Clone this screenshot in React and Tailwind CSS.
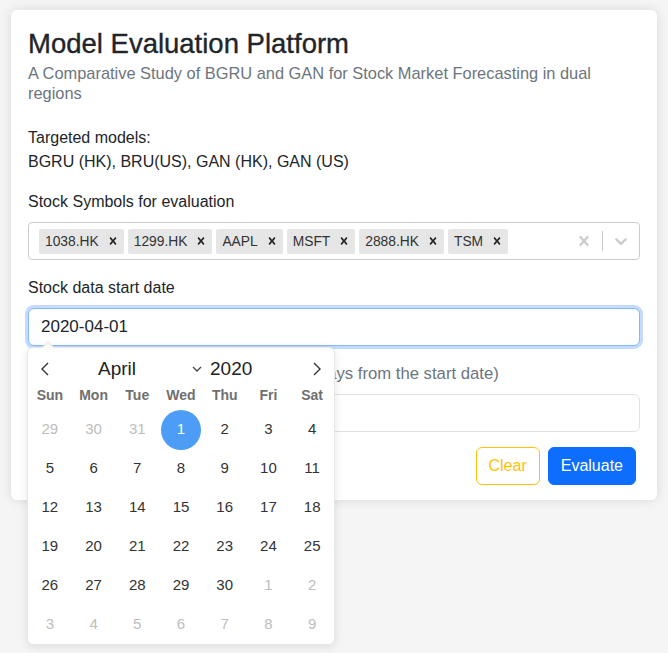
import React from "react";

const tags = ["1038.HK", "1299.HK", "AAPL", "MSFT", "2888.HK", "TSM"];
const weekDays = ["Sun", "Mon", "Tue", "Wed", "Thu", "Fri", "Sat"];

// 6 weeks starting Sun 29 March 2020
const cells = Array.from({ length: 42 }, (_, i) => {
  if (i < 3) return { label: 29 + i, outside: true };
  const n = i - 2;
  if (n > 30) return { label: n - 30, outside: true };
  return { label: n, outside: false, selected: n === 1 };
});

const CrossIcon = ({ size = 20, className = "" }) => (
  <svg width={size} height={size} viewBox="0 0 20 20" className={className} fill="currentColor">
    <path d="M14.348 14.849c-0.469 0.469-1.229 0.469-1.697 0l-2.651-3.030-2.651 3.029c-0.469 0.469-1.229 0.469-1.697 0-0.469-0.469-0.469-1.229 0-1.697l2.758-3.15-2.759-3.152c-0.469-0.469-0.469-1.228 0-1.697s1.228-0.469 1.697 0l2.652 3.031 2.651-3.031c0.469-0.469 1.228-0.469 1.697 0s0.469 1.229 0 1.697l-2.758 3.152 2.758 3.15c0.469 0.469 0.469 1.229 0 1.698z" />
  </svg>
);

const ChevronIcon = ({ size = 20, className = "" }) => (
  <svg width={size} height={size} viewBox="0 0 20 20" className={className} fill="currentColor">
    <path d="M4.516 7.548c0.436-0.446 1.043-0.481 1.576 0l3.908 3.747 3.908-3.747c0.533-0.481 1.141-0.446 1.574 0 0.436 0.445 0.408 1.197 0 1.615-0.406 0.418-4.695 4.502-4.695 4.502-0.217 0.223-0.502 0.335-0.787 0.335s-0.57-0.112-0.789-0.335c0 0-4.287-4.084-4.695-4.502s-0.436-1.17 0-1.615z" />
  </svg>
);

const Calendar = () => (
  <div className="absolute left-[-1px] top-[39px] z-10 w-[308px] rounded-[6px] border border-[#e6e6e6] bg-white pt-[8px] shadow-[0_2px_10px_rgba(0,0,0,0.1)]">
    <div className="absolute left-[16px] top-[-5px] h-[8px] w-[8px] rotate-45 border-l border-t border-[#e6e6e6] bg-white" />
    <div className="flex h-[26px] items-center text-[#222]">
      <div className="flex w-[34px] justify-center">
        <svg width="8" height="14" viewBox="0 0 8 14" fill="none" stroke="#333" strokeWidth="1.4">
          <path d="M7 1 1 7l6 6" />
        </svg>
      </div>
      <span className="ml-[36px] text-[19px]">April</span>
      <svg className="ml-[56px]" width="10" height="6" viewBox="0 0 10 6" fill="none" stroke="#444" strokeWidth="1.3">
        <path d="m1 1 4 4 4-4" />
      </svg>
      <span className="ml-[8px] text-[19px]">2020</span>
      <div className="ml-auto flex w-[34px] justify-center">
        <svg width="8" height="14" viewBox="0 0 8 14" fill="none" stroke="#333" strokeWidth="1.4">
          <path d="m1 1 6 6-6 6" />
        </svg>
      </div>
    </div>
    <div className="mt-[3px] grid h-[20px] grid-cols-7 items-center text-center text-[14px] font-bold text-[#6f6f6f]">
      {weekDays.map((d) => (
        <div key={d}>{d}</div>
      ))}
    </div>
    <div className="mt-[5px] grid grid-cols-7">
      {cells.map((c, i) => (
        <div key={i} className="flex h-[39px] items-center justify-center text-[15px]">
          {c.selected ? (
            <div className="flex h-[40px] w-[40px] items-center justify-center rounded-full bg-[#4d9cf5] text-white">
              {c.label}
            </div>
          ) : (
            <span className={c.outside ? "text-[#bdbdbd]" : "text-[#333]"}>{c.label}</span>
          )}
        </div>
      ))}
    </div>
  </div>
);

export default function App() {
  return (
    <div className="min-h-screen bg-[#f5f5f5] px-[11px] pt-[10px] font-['Liberation_Sans',Arial,sans-serif] text-[16px] text-[#212529]">
      <div className="rounded-[6px] bg-white px-[17px] pb-[15px] pt-[17px] shadow-[0_0_12px_rgba(0,0,0,0.12)]">
        <h1 className="text-[27.5px] font-medium leading-[1.2] [-webkit-text-stroke:0.35px_#212529]">
          Model Evaluation Platform
        </h1>
        <p className="mt-[3px] text-[16.4px] leading-[20px] text-[#6c757d]">
          A Comparative Study of BGRU and GAN for Stock Market Forecasting in dual regions
        </p>

        <div className="mt-[23px] leading-[24px]">
          <div>Targeted models:</div>
          <div>BGRU (HK), BRU(US), GAN (HK), GAN (US)</div>
        </div>

        <div className="mt-[16px]">
          <label className="mb-[8px] block leading-[24px]">Stock Symbols for evaluation</label>
          <div className="flex min-h-[38px] items-center rounded-[4px] border border-[#cccccc] bg-white">
            <div className="flex flex-1 flex-wrap items-center px-[8px] py-[2px]">
              {tags.map((t) => (
                <div key={t} className="m-[2px] flex items-center rounded-[2px] bg-[#e6e6e6]">
                  <span className="py-[3px] pl-[6px] pr-[3px] text-[13.8px] leading-[19px] text-[#333]">{t}</span>
                  <span className="flex h-[25px] items-center px-[4px] text-[#222]">
                    <CrossIcon size={14} />
                  </span>
                </div>
              ))}
            </div>
            <div className="flex items-center self-stretch">
              <span className="flex p-[8px] text-[#cccccc]">
                <CrossIcon />
              </span>
              <span className="my-[8px] w-px self-stretch bg-[#cccccc]" />
              <span className="flex p-[8px] text-[#cccccc]">
                <ChevronIcon />
              </span>
            </div>
          </div>
        </div>

        <div className="mt-[16px]">
          <label className="mb-[8px] block leading-[24px]">Stock data start date</label>
          <div className="relative">
            <input
              readOnly
              value="2020-04-01"
              className="block h-[38px] w-full rounded-[6px] border border-[#86b7fe] bg-white px-[12px] text-[17px] text-[#212529] outline-none shadow-[0_0_0_3px_rgba(13,110,253,0.25)]"
            />
            <Calendar />
          </div>
        </div>

        <div className="mt-[16px]">
          <label className="mb-[8px] block leading-[24px]">
            Number of days to evaluate:{" "}
            <span className="text-[16.7px] text-[#6c757d]">(number of days from the start date)</span>
          </label>
          <input className="block h-[38px] w-full rounded-[6px] border border-[#dee2e6] bg-white px-[12px] outline-none" />
        </div>

        <div className="mt-[15px] flex justify-end gap-[8px] pr-[4px]">
          <button className="h-[38px] rounded-[6px] border border-[#ffc107] bg-white px-[12px] text-[16px] text-[#ffc107]">
            Clear
          </button>
          <button className="h-[38px] rounded-[6px] border border-[#0d6efd] bg-[#0d6efd] px-[12px] text-[16px] text-white">
            Evaluate
          </button>
        </div>
      </div>
    </div>
  );
}
